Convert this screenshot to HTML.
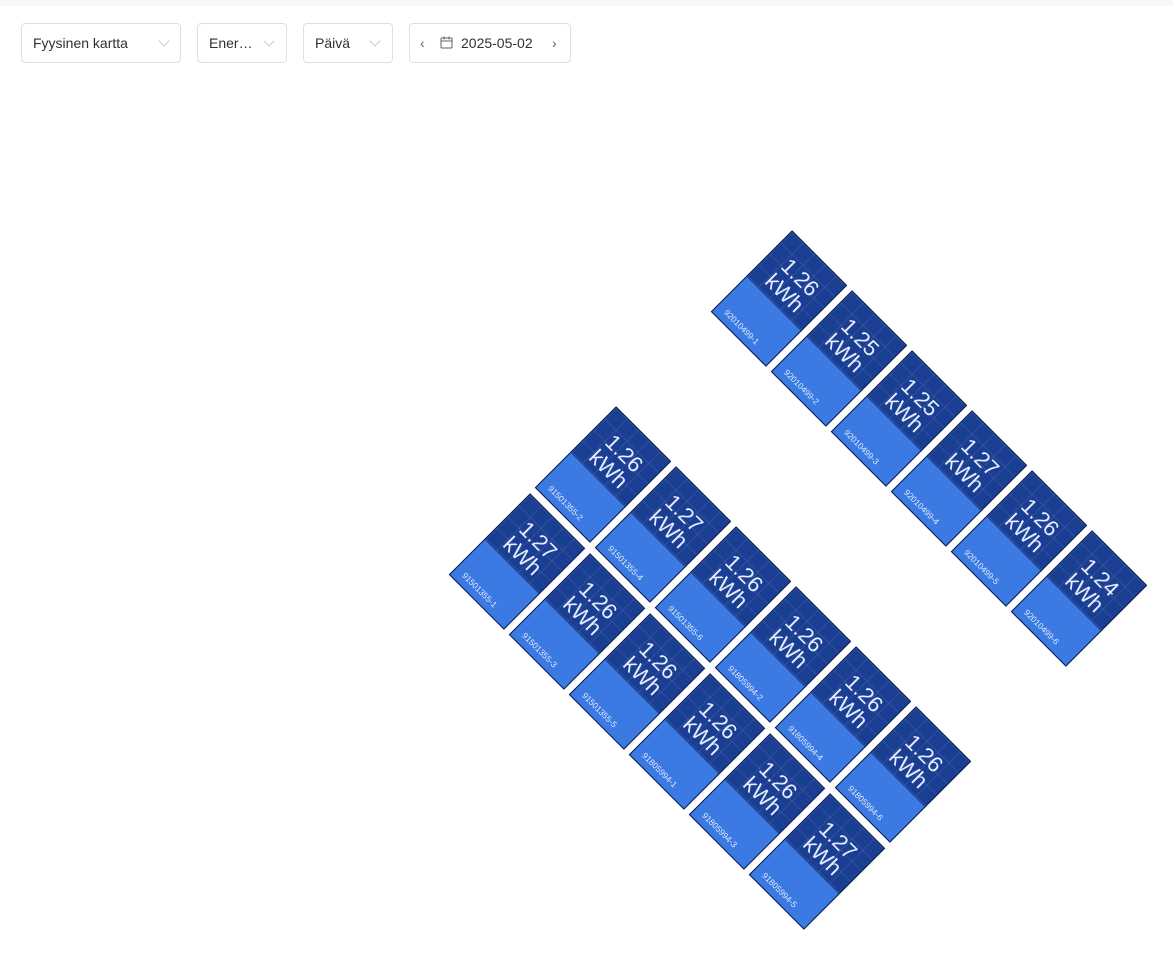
<!DOCTYPE html>
<html><head><meta charset="utf-8"><style>
body{margin:0;width:1173px;height:957px;background:#fff;position:relative;overflow:hidden;font-family:"Liberation Sans",sans-serif}
.top{position:absolute;left:0;top:0;width:1173px;height:6px;background:#f5f7fa}
.sel{position:absolute;top:23px;border:1px solid #dcdfe6;border-radius:4px;box-sizing:border-box;height:40px;font-size:14px;color:#303133;line-height:38px}
.sel span{position:absolute;left:11px}
.chev{position:absolute;top:13px;width:7px;height:7px;border-right:1px solid #c8ccd4;border-bottom:1px solid #c8ccd4;transform:rotate(45deg)}
.p{position:absolute;width:78px;height:115px;transform:rotate(45deg);box-sizing:border-box;border:1px solid #0e2152;background:#1a3e92;overflow:hidden}
.p .g{position:absolute;left:0;top:0;right:0;height:66px;background-image:linear-gradient(to right,rgba(255,255,255,.09) 1px,transparent 1px),linear-gradient(to bottom,rgba(255,255,255,.09) 1px,transparent 1px);background-size:15.5px 15.5px}
.p .s{position:absolute;left:0;right:0;bottom:0;height:49px;background:#3b7ae2}
.p .v{position:absolute;left:0;right:0;top:16px;text-align:center;color:#e6edff;font-size:22px;line-height:22px}
.p .l{position:absolute;left:9px;top:98px;color:#dfe8ff;font-size:8.5px}
</style></head><body>
<div class="top"></div>
<div class="sel" style="left:21px;width:160px"><span>Fyysinen kartta</span><i class="chev" style="left:138px"></i></div>
<div class="sel" style="left:197px;width:90px"><span>Ener…</span><i class="chev" style="left:67px"></i></div>
<div class="sel" style="left:303px;width:90px"><span>Päivä</span><i class="chev" style="left:67px"></i></div>
<div class="sel" style="left:409px;width:162px">
<span style="left:10px;color:#606266">‹</span>
<svg style="position:absolute;left:30px;top:12px" width="13" height="13" viewBox="0 0 13 13" fill="none" stroke="#606266" stroke-width="1"><rect x="1" y="2" width="11" height="10" rx="1"/><path d="M1 5h11M4 0.5v3M9 0.5v3"/></svg>
<span style="left:51px">2025-05-02</span>
<span style="left:142px;color:#606266">›</span></div>
<div id="c"></div>
<script>
var d=[];
var up=["1.26","1.25","1.25","1.27","1.26","1.24"];
var A=["1.26","1.27","1.26","1.26","1.26","1.26"],AL=["91501355-2","91501355-4","91501355-6","91805994-2","91805994-4","91805994-6"];
var B=["1.27","1.26","1.26","1.26","1.26","1.27"],BL=["91501355-1","91501355-3","91501355-5","91805994-1","91805994-3","91805994-5"];
for(var i=0;i<6;i++){d.push([779+60*i,298+60*i,up[i],"92010499-"+(i+1)]);d.push([603+60*i,474+60*i,A[i],AL[i]]);d.push([517+60*i,561+60*i,B[i],BL[i]]);}
var h="";d.forEach(function(p){h+='<div class="p" style="left:'+(p[0]-39)+'px;top:'+(p[1]-57.5)+'px"><div class="g"></div><div class="s"></div><div class="v">'+p[2]+'<br>kWh</div><div class="l">'+p[3]+'</div></div>';});
document.getElementById("c").innerHTML=h;
</script>
</body></html>
